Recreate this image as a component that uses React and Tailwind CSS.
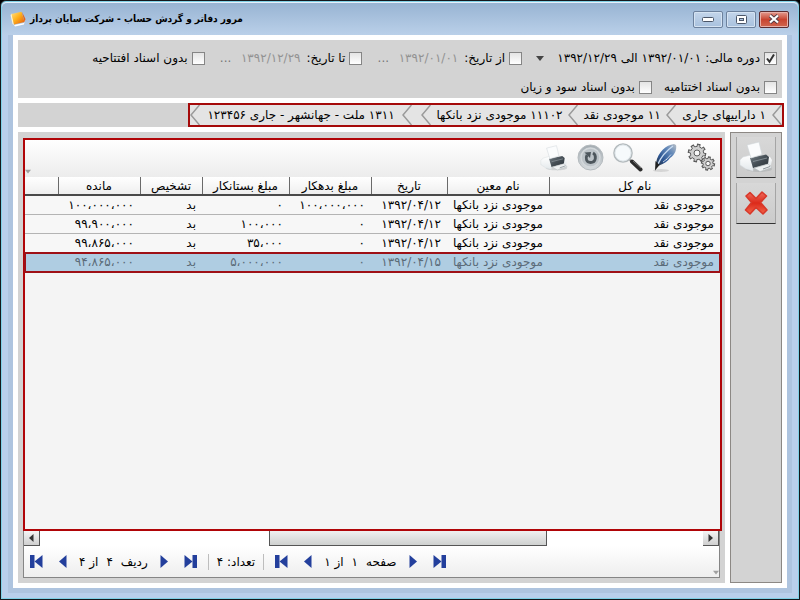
import React from 'react';

const rows = [
  { total: 'موجودی نقد', sub: 'موجودی نزد بانکها', date: '۱۳۹۲/۰۴/۱۲', debit: '۱۰۰،۰۰۰،۰۰۰', credit: '۰', kind: 'بد', balance: '۱۰۰،۰۰۰،۰۰۰' },
  { total: 'موجودی نقد', sub: 'موجودی نزد بانکها', date: '۱۳۹۲/۰۴/۱۲', debit: '۰', credit: '۱۰۰،۰۰۰', kind: 'بد', balance: '۹۹،۹۰۰،۰۰۰' },
  { total: 'موجودی نقد', sub: 'موجودی نزد بانکها', date: '۱۳۹۲/۰۴/۱۲', debit: '۰', credit: '۳۵،۰۰۰', kind: 'بد', balance: '۹۹،۸۶۵،۰۰۰' },
  { total: 'موجودی نقد', sub: 'موجودی نزد بانکها', date: '۱۳۹۲/۰۴/۱۵', debit: '۰', credit: '۵،۰۰۰،۰۰۰', kind: 'بد', balance: '۹۴،۸۶۵،۰۰۰', selected: true },
];

const columns = [
  { title: 'نام کل', width: 'w-[171px]' },
  { title: 'نام معین', width: 'w-[102px]' },
  { title: 'تاریخ', width: 'w-[76px]' },
  { title: 'مبلغ بدهکار', width: 'w-[82px]' },
  { title: 'مبلغ بستانکار', width: 'w-[87px]' },
  { title: 'تشخیص', width: 'w-[62px]' },
  { title: 'مانده', width: 'w-[82px]' },
  { title: '', width: '' },
];

function AppLogo() {
  return (
    <svg width="16" height="16" viewBox="0 0 16 16" aria-hidden="true">
      <defs>
        <linearGradient id="logo" x1="0" y1="0" x2="1" y2="1">
          <stop offset="0" stopColor="#ffe08a" />
          <stop offset="0.45" stopColor="#ffb21c" />
          <stop offset="1" stopColor="#e2560c" />
        </linearGradient>
      </defs>
      <path d="M4 14 L14 12 L15.500 6 L14 13.500 L5 15.500Z" fill="#fff" />
      <path d="M0.500 4 L2 2.500 L4 14 L2.500 13Z" fill="#fff3d0" />
      <path d="M1.500 3 L11.500 0.800 L14.500 11 L4 13.500Z" fill="url(#logo)" />
      <path d="M12 1 L15.500 8 L14.500 11Z" fill="#e8641a" />
    </svg>
  );
}

function Printer({ size }) {
  return (
    <svg width={size} height={size} viewBox="0 0 34 34" aria-hidden="true">
      <defs>
        <linearGradient id="printerBody" x1="0" y1="0" x2="0" y2="1">
          <stop offset="0" stopColor="#ffffff" />
          <stop offset="1" stopColor="#e3e8eb" />
        </linearGradient>
        <linearGradient id="printerTop" x1="0" y1="0" x2="1" y2="1">
          <stop offset="0" stopColor="#7b858c" />
          <stop offset="0.5" stopColor="#454e55" />
          <stop offset="1" stopColor="#2b3238" />
        </linearGradient>
      </defs>
      <ellipse cx="20" cy="29" rx="13" ry="3" fill="#8c9296" opacity="0.3" />
      <path d="M1 20 L4 17 L12 15 L14 18 L14 31 L7 29 L1 25Z" fill="url(#printerBody)" stroke="#d3d9dc" strokeWidth="0.500" />
      <path d="M26 16 L31 17 L33 20 L32 25 L26 26Z" fill="url(#printerBody)" />
      <path d="M11 18 L27 14.500 L30 17 L29 24 L14 28Z" fill="url(#printerTop)" />
      <path d="M8 5 L20 2 L23 14.500 L12 18Z" fill="#fbfcfd" stroke="#cfd5d9" strokeWidth="0.600" />
      <path d="M14 21.500 L28 18" stroke="#8f999f" strokeWidth="0.800" />
      <path d="M15 28 L29 24 L33 27.500 L21 31.500Z" fill="#eef1f2" stroke="#b5bcc0" strokeWidth="0.600" />
      <path d="M24 29 L31 26.500" stroke="#8d959a" strokeWidth="1" />
    </svg>
  );
}

function RedCross() {
  return (
    <svg width="26" height="26" viewBox="0 0 26 26" aria-hidden="true">
      <defs>
        <linearGradient id="cross" x1="0" y1="0" x2="0" y2="1">
          <stop offset="0" stopColor="#ef6a5c" />
          <stop offset="0.5" stopColor="#dc2a1a" />
          <stop offset="1" stopColor="#f2644a" />
        </linearGradient>
      </defs>
      <path d="M3 6 L7 2.500 L13 8.500 L19 2 L23.500 6 L17.500 12.500 L24 20 L20 24 L13 17.500 L7 24 L2.500 20 L8.500 12.500Z" fill="url(#cross)" stroke="#d8382a" strokeWidth="1.600" strokeLinejoin="round" />
    </svg>
  );
}

function Gear({ x, y, r, holeFill }) {
  const teeth = [0, 45, 90, 135, 180, 225, 270, 315];
  return (
    <g transform={`translate(${x} ${y})`}>
      {teeth.map((a) => (
        <rect key={a} x={-r * 0.2} y={-r * 1.32} width={r * 0.4} height={r * 0.5} transform={`rotate(${a + 12})`} fill="#bdbdbd" stroke="#555" strokeWidth="1" />
      ))}
      <circle r={r} fill="#cfcfcf" stroke="#5c5c5c" strokeWidth="1" />
      {teeth.map((a) => (
        <rect key={a} x={-r * 0.15} y={-r * 1.1} width={r * 0.3} height={r * 0.5} transform={`rotate(${a + 12})`} fill="#cfcfcf" />
      ))}
      <circle r={r * 0.45} fill={holeFill} stroke="#5c5c5c" strokeWidth="1" />
    </g>
  );
}

function Gears() {
  return (
    <svg width="30" height="30" viewBox="0 0 30 30" aria-hidden="true">
      <Gear x={10} y={10} r={6.6} holeFill="#f8f8f8" />
      <Gear x={21} y={20.5} r={5} holeFill="#f4f4f4" />
    </svg>
  );
}

function Quill() {
  return (
    <svg width="30" height="30" viewBox="0 0 30 30" aria-hidden="true">
      <defs>
        <linearGradient id="quill" x1="1" y1="0" x2="0" y2="1">
          <stop offset="0" stopColor="#b9bfc6" />
          <stop offset="0.35" stopColor="#5f86b8" />
          <stop offset="0.7" stopColor="#2c5592" />
          <stop offset="1" stopColor="#2a3138" />
        </linearGradient>
      </defs>
      <ellipse cx="11" cy="27.500" rx="8" ry="1.500" fill="#999" opacity="0.3" />
      <path d="M24 1 C16 2 8 9 6 20 L9 22.500 C14 21 18 18 20 15 C25 12 27 6 26 2Z" fill="url(#quill)" />
      <path d="M23 3 C16 8 11 14 8 21" fill="none" stroke="#c9dcf2" strokeWidth="1.400" />
      <path d="M16 17 L21 11.500 M13 19 L17 16" stroke="#e8eef5" strokeWidth="0.800" />
      <path d="M5.500 18 L9.500 22 L5 27.500Z" fill="#222" />
    </svg>
  );
}

function Magnifier() {
  return (
    <svg width="30" height="30" viewBox="0 0 30 30" aria-hidden="true">
      <path d="M16 16 L19 19" stroke="#999" strokeWidth="2" />
      <path d="M19 18.500 L27.500 26.500" stroke="#2c2c2c" strokeWidth="4" strokeLinecap="round" />
      <path d="M20 18 L28 25" stroke="#777" strokeWidth="1" />
      <circle cx="10" cy="10" r="9" fill="#f6fafc" stroke="#b3babd" strokeWidth="1.600" />
      <circle cx="10" cy="10" r="8" fill="none" stroke="#dfe6ea" strokeWidth="1" />
    </svg>
  );
}

function Refresh() {
  return (
    <svg width="30" height="30" viewBox="0 0 30 30" aria-hidden="true">
      <defs>
        <linearGradient id="disc" x1="0" y1="0" x2="0" y2="1">
          <stop offset="0" stopColor="#a3abb1" />
          <stop offset="1" stopColor="#d6dbde" />
        </linearGradient>
      </defs>
      <circle cx="14.500" cy="14.500" r="12.500" fill="url(#disc)" stroke="#b4babe" />
      <circle cx="14.500" cy="14.500" r="9.500" fill="#bcc3c8" stroke="#d3d8db" strokeWidth="1.500" />
      <path d="M17 10 C20.500 12 20.500 19.500 14.500 19.500 C10 19.500 9.500 15 11 12" fill="none" stroke="#4d565c" strokeWidth="2.800" />
      <path d="M8.500 9.500 L15 9 L14 15Z" fill="#4d565c" />
    </svg>
  );
}

function Chevron() {
  return (
    <svg className="shrink-0" width="10" height="20" viewBox="0 0 10 20" aria-hidden="true">
      <path d="M9.500 0 L1 10 L9.500 20" fill="none" stroke="#9a9a9a" strokeWidth="1.500" />
    </svg>
  );
}

function DownMark({ className }) {
  return (
    <svg className={className} width="8" height="5" viewBox="0 0 8 5" aria-hidden="true">
      <path d="M0 0 H8 L4 5Z" fill="currentColor" />
    </svg>
  );
}

function Check({ id, label, checked }) {
  return (
    <div className="flex items-center gap-1">
      <span className="grid h-[13px] w-[13px]">
        <input
          id={id}
          type="checkbox"
          defaultChecked={checked}
          className="peer col-start-1 row-start-1 h-[13px] w-[13px] appearance-none border border-[#858585] bg-linear-to-b from-[#e4e4e4] to-white"
        />
        <svg className="pointer-events-none invisible col-start-1 row-start-1 peer-checked:visible" width="13" height="13" viewBox="0 0 13 13" aria-hidden="true">
          <path d="M3 6.500 L5.500 9.800 L10 2.500" fill="none" stroke="#333" strokeWidth="2" />
        </svg>
      </span>
      <label htmlFor={id}>{label}</label>
    </div>
  );
}

function DateField({ id, label, value }) {
  return (
    <div className="flex items-center">
      <Check id={id} label={label} />
      <input aria-label={label} defaultValue={value} className="mr-[6px] w-[62px] bg-transparent text-right text-[#929292] outline-none" />
      <button type="button" aria-label="انتخاب تاریخ" className="mr-[6px] w-[14px] text-center text-[#777]">...</button>
    </div>
  );
}

function CaptionButton({ label, close, children }) {
  return (
    <button
      type="button"
      aria-label={label}
      className={
        close
          ? 'grid h-[17px] w-[30px] place-items-center rounded-[2px] border border-[#5c2c30] bg-linear-to-b from-[#e29a90] via-[#c8432f] to-[#d0664f] shadow-[inset_0_0_0_1px_#e8b0a8]'
          : 'grid h-[17px] w-[30px] place-items-center rounded-[2px] border border-[#6c819d] bg-linear-to-b from-[#c3d5ea] to-[#a8c1de] shadow-[inset_0_0_0_1px_#d5e3f2]'
      }
    >
      {children}
    </button>
  );
}

function NavButton({ label, end, forward }) {
  return (
    <button type="button" aria-label={label} className="shrink-0">
      <svg width={end ? 13 : 8} height="13" viewBox={end ? '0 0 13 13' : '0 0 8 13'} aria-hidden="true">
        {end && <rect x={forward ? 8.5 : 0} y="0" width="4.500" height="13" fill="#233f9c" />}
        {end && <path d={forward ? 'M0.500 0 L8.500 6.500 L0.500 13Z' : 'M12.500 0 L4.500 6.500 L12.500 13Z'} fill="#233f9c" />}
        {!end && <path d={forward ? 'M0.500 0 L8 6.500 L0.500 13Z' : 'M7.500 0 L0 6.500 L7.500 13Z'} fill="#233f9c" />}
      </svg>
    </button>
  );
}

function Pager({ name, position, total }) {
  return (
    <div className="flex items-center gap-3">
      <div className="flex gap-4">
        <NavButton label={`${name}: آخرین`} end />
        <NavButton label={`${name}: بعدی`} />
      </div>
      <div dir="rtl" className="flex items-center gap-2">
        <span>{name}</span>
        <span>{position}</span>
        <span>از {total}</span>
      </div>
      <div className="flex gap-4">
        <NavButton label={`${name}: قبلی`} forward />
        <NavButton label={`${name}: اولین`} end forward />
      </div>
    </div>
  );
}

function Filters() {
  return (
    <section className="flex flex-col gap-[13px] bg-[#d3d3d3] px-[5px] pt-[10px] pb-[3px]">
      <div className="flex h-4 items-center">
        <div className="flex items-center gap-1">
          <Check id="period" label="دوره مالی:" checked />
          <div className="flex items-center">
            <select aria-label="دوره مالی" className="w-[153px] appearance-none bg-transparent p-0">
              <option>۱۳۹۲/۰۱/۰۱ الی ۱۳۹۲/۱۲/۲۹</option>
            </select>
            <DownMark className="mr-1 text-[#444]" />
          </div>
        </div>
        <div className="mr-[14px] flex items-center gap-[14px]">
          <DateField id="from" label="از تاریخ:" value="۱۳۹۲/۰۱/۰۱" />
          <DateField id="to" label="تا تاریخ:" value="۱۳۹۲/۱۲/۲۹" />
          <Check id="opening" label="بدون اسناد افتتاحیه" />
        </div>
      </div>
      <div className="flex h-4 items-center gap-3">
        <Check id="closing" label="بدون اسناد اختتامیه" />
        <Check id="profit" label="بدون اسناد سود و زیان" />
      </div>
    </section>
  );
}

function Crumb({ width, children }) {
  return (
    <li className="flex h-full items-center">
      <a href="#" className={`flex justify-center ${width}`}>{children}</a>
      <Chevron />
    </li>
  );
}

function Breadcrumbs() {
  return (
    <nav className="flex bg-[#d3d3d3]">
      <ol className="-mr-[2px] flex h-6 items-center border-2 border-[#a50a0a] bg-[#e4e4e4]">
        <li className="flex"><Chevron /></li>
        <Crumb width="w-[96px]">۱ داراییهای جاری</Crumb>
        <Crumb width="w-[88px]">۱۱ موجودی نقد</Crumb>
        <Crumb width="w-[137px]">۱۱۱۰۲ موجودی نزد بانکها</Crumb>
        <li className="mr-[9px] flex"><Chevron /></li>
        <Crumb width="w-[202px]">۱۳۱۱ ملت - جهانشهر - جاری ۱۲۳۴۵۶</Crumb>
      </ol>
    </nav>
  );
}

function Ledger() {
  return (
    <table className="w-full table-fixed border-collapse">
      <thead>
        <tr className="h-[18px] bg-linear-to-b from-white to-[#eeeeee]">
          {columns.map((c, i) => (
            <th
              key={i}
              scope="col"
              className={`border-b-2 border-b-[#4a4a4a] p-0 text-center font-normal leading-4 ${i < 7 ? 'border-l border-l-[#6a6a6a]' : ''} ${c.width}`}
            >
              {c.title}
            </th>
          ))}
        </tr>
      </thead>
      <tbody>
        {rows.map((r, i) => (
          <tr
            key={i}
            className={
              r.selected
                ? 'h-[19px] bg-[#afcde2] text-[#5b6b78] outline-2 -outline-offset-1 outline-[#9e1016]'
                : 'h-[19px] border-b border-[#b4b4b4] bg-[#f7f7f7]'
            }
          >
            {[r.total, r.sub, r.date, r.debit, r.credit, r.kind, r.balance].map((v, j) => (
              <td key={j} className="overflow-hidden whitespace-nowrap py-0 pl-0 pr-[6px] text-right leading-[18px]">{v}</td>
            ))}
            <td className="p-0" />
          </tr>
        ))}
      </tbody>
    </table>
  );
}

function ToolButton({ label, children }) {
  return (
    <button type="button" aria-label={label} className="grid h-[30px] w-[30px] place-items-center">
      {children}
    </button>
  );
}

function ScrollButton({ label, d }) {
  return (
    <button type="button" aria-label={label} className="grid h-[15px] w-4 place-items-center border-r border-b border-[#555] bg-linear-to-b from-[#f5f5f5] to-[#cfcfcf]">
      <svg width="5" height="8" viewBox="0 0 5 8" aria-hidden="true"><path d={d} fill="#333" /></svg>
    </button>
  );
}

function SideButton({ label, children }) {
  return (
    <button type="button" aria-label={label} className="grid h-[41px] w-10 place-items-center border-x border-b border-x-[#a5a5a5] border-b-[#333] bg-linear-to-b from-[#d8d8d8] to-[#cbcbcb]">
      {children}
    </button>
  );
}

export default function App() {
  return (
    <div className="bg-black">
      <div dir="rtl" className="flex min-h-screen flex-col rounded-t-[6px] border border-[#15181c] bg-[#b9cfeb] font-['DejaVu_Sans',sans-serif] text-xs text-black shadow-[inset_0_0_0_1px_#7fd0e6]">
        <header dir="ltr" className="mx-px mt-px flex h-[33px] items-center justify-between rounded-t-[5px] border-t border-[#e6f0fa] bg-linear-to-b from-[#98b4d3] to-[#bad0e9] pr-[9px] pl-2">
          <div className="flex items-center gap-1">
            <AppLogo />
            <h1 dir="rtl" className="font-['DejaVu_Sans_Condensed','DejaVu_Sans',sans-serif] text-[10px] leading-4 font-bold">
              مرور دفاتر و گردش حساب - شرکت سایان پرداز
            </h1>
          </div>
          <div className="flex gap-[3px]">
            <CaptionButton label="کوچک کردن">
              <svg width="12" height="5" viewBox="0 0 12 5" aria-hidden="true"><rect x="0.500" y="0.500" width="11" height="4" rx="1" fill="#fff" stroke="#4b5668" /></svg>
            </CaptionButton>
            <CaptionButton label="بزرگ کردن">
              <svg width="11" height="9" viewBox="0 0 11 9" aria-hidden="true">
                <rect x="0.500" y="0.500" width="10" height="8" rx="1" fill="#fff" stroke="#4b5668" />
                <rect x="3.500" y="3.500" width="4" height="2" fill="#a9c1de" stroke="#4b5668" />
              </svg>
            </CaptionButton>
            <CaptionButton label="بستن" close>
              <svg width="12" height="10" viewBox="0 0 12 10" aria-hidden="true">
                <path d="M2 1.500 L10 8.500 M10 1.500 L2 8.500" stroke="#4f3a44" strokeWidth="3.800" />
                <path d="M2 1.500 L10 8.500 M10 1.500 L2 8.500" stroke="#fff" strokeWidth="2.200" />
              </svg>
            </CaptionButton>
          </div>
        </header>

        <div className="mx-[7px] mb-[6px] flex grow flex-col border-x-[5px] border-b-[5px] border-[#aec4df]">
          <main className="flex grow flex-col gap-[5px] bg-white p-[5px]">
            <Filters />
            <Breadcrumbs />

            <div className="flex grow gap-[5px]">
              <aside className="flex w-[52px] shrink-0 flex-col items-center gap-[5px] border border-[#8c8884] bg-[#d3d3d3] pt-1">
                <SideButton label="چاپ"><Printer size={34} /></SideButton>
                <SideButton label="حذف"><RedCross /></SideButton>
              </aside>

              <section className="flex min-w-0 grow flex-col bg-[#d3d3d3] pt-[6px] pr-[3px] pb-[5px] pl-[5px]">
                <div className="flex grow flex-col border-2 border-[#b00508] bg-[#f4f4f4]">
                  <div className="flex h-[37px] items-end justify-between bg-linear-to-b from-white to-[#ececec] pr-[3px]">
                    <div className="flex gap-[7px] pb-1">
                      <ToolButton label="تنظیمات"><Gears /></ToolButton>
                      <ToolButton label="ویرایش"><Quill /></ToolButton>
                      <ToolButton label="جستجو"><Magnifier /></ToolButton>
                      <ToolButton label="بازخوانی"><Refresh /></ToolButton>
                      <ToolButton label="چاپ فهرست"><Printer size={28} /></ToolButton>
                    </div>
                    <DownMark className="mb-[3px] w-[6px] text-[#a0a0a0]" />
                  </div>
                  <Ledger />
                </div>

                <div className="mr-[2px] flex flex-col border-r border-b border-l border-[#858585] bg-white">
                  <div dir="ltr" className="flex h-[15px]">
                    <ScrollButton label="پیمایش به چپ" d="M4.500 0 V8 L0 4Z" />
                    <div className="grow">
                      <div className="ml-[34.5%] h-[15px] w-[42%] border-x border-b border-[#555] bg-linear-to-b from-[#f0f0f0] to-[#cfd1d0]" />
                    </div>
                    <ScrollButton label="پیمایش به راست" d="M0.500 0 V8 L5 4Z" />
                  </div>
                  <footer dir="ltr" className="flex h-[31px] items-center bg-linear-to-b from-white to-[#eeeeee] pl-[6px]">
                    <Pager name="ردیف" position="۴" total="۴" />
                    <div dir="rtl" className="mx-[11px] border-x border-[#bdbdbd] px-2 leading-4">تعداد: ۴</div>
                    <Pager name="صفحه" position="۱" total="۱" />
                    <DownMark className="mb-[2px] ml-auto w-[6px] self-end text-[#a0a0a0]" />
                  </footer>
                </div>
              </section>
            </div>
          </main>
        </div>
      </div>
    </div>
  );
}
